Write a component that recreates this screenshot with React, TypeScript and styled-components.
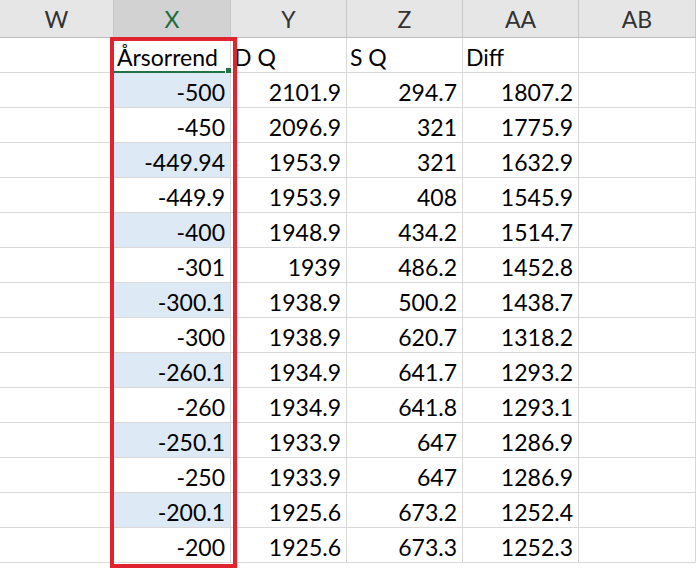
import React from "react";
import styled, { createGlobalStyle } from "styled-components";

const Global = createGlobalStyle`
  html, body { margin: 0; padding: 0; background: #fff; }
  body { font-family: Lato, "Open Sans", sans-serif; }
`;

const Sheet = styled.div`
  position: relative;
  display: grid;
  grid-template-columns: 114px 117px 116px 116px 116px 117px;
  grid-template-rows: 38px;
  grid-auto-rows: 35px;
  width: 696px;
  height: 578px;
  align-content: start;
`;

const ColHead = styled.div<{ $sel?: boolean }>`
  display: flex;
  align-items: center;
  justify-content: center;
  font-size: 23px;
  background: ${(p) => (p.$sel ? "#d2d2d2" : "#e6e6e6")};
  color: ${(p) => (p.$sel ? "#1e6b3f" : "#333")};
  border-right: 1px solid #c8c8c8;
  border-bottom: 1px solid ${(p) => (p.$sel ? "#217346" : "#bdbdbd")};
  box-sizing: border-box;
`;

const Cell = styled.div<{ $hl?: boolean; $left?: boolean; $active?: boolean }>`
  position: relative;
  box-sizing: border-box;
  border-right: 1px solid #d9d9d9;
  border-bottom: ${(p) => (p.$active ? "2px solid #217346" : "1px solid #d9d9d9")};
  background: ${(p) => (p.$hl ? "#dde9f5" : "#fff")};
  font-size: 23px;
  color: #000;
  display: flex;
  align-items: center;
  justify-content: ${(p) => (p.$left ? "flex-start" : "flex-end")};
  padding: 4px 5px 0 3px;
  white-space: nowrap;
  overflow: visible;
`;

const Handle = styled.span`
  position: absolute;
  right: -3px;
  bottom: -4px;
  width: 6px;
  height: 6px;
  background: #217346;
  border: 1px solid #fff;
`;

const RedBox = styled.div`
  position: absolute;
  left: 110px;
  top: 37px;
  width: 127px;
  height: 531px;
  border: 4px solid #e0232e;
  box-sizing: border-box;
  pointer-events: none;
`;

const rows: [string, string, string, string][] = [
  ["-500", "2101.9", "294.7", "1807.2"],
  ["-450", "2096.9", "321", "1775.9"],
  ["-449.94", "1953.9", "321", "1632.9"],
  ["-449.9", "1953.9", "408", "1545.9"],
  ["-400", "1948.9", "434.2", "1514.7"],
  ["-301", "1939", "486.2", "1452.8"],
  ["-300.1", "1938.9", "500.2", "1438.7"],
  ["-300", "1938.9", "620.7", "1318.2"],
  ["-260.1", "1934.9", "641.7", "1293.2"],
  ["-260", "1934.9", "641.8", "1293.1"],
  ["-250.1", "1933.9", "647", "1286.9"],
  ["-250", "1933.9", "647", "1286.9"],
  ["-200.1", "1925.6", "673.2", "1252.4"],
  ["-200", "1925.6", "673.3", "1252.3"],
];

export default function App() {
  return (
    <>
      <Global />
      <Sheet>
        {["W", "X", "Y", "Z", "AA", "AB"].map((c) => (
          <ColHead key={c} $sel={c === "X"}>{c}</ColHead>
        ))}
        <Cell />
        <Cell $left $active>Årsorrend<Handle /></Cell>
        <Cell $left>D Q</Cell>
        <Cell $left>S Q</Cell>
        <Cell $left>Diff</Cell>
        <Cell />
        {rows.map((r, i) => (
          <React.Fragment key={i}>
            <Cell />
            <Cell $hl={i % 2 === 0}>{r[0]}</Cell>
            <Cell>{r[1]}</Cell>
            <Cell>{r[2]}</Cell>
            <Cell>{r[3]}</Cell>
            <Cell />
          </React.Fragment>
        ))}
        <RedBox />
      </Sheet>
    </>
  );
}
